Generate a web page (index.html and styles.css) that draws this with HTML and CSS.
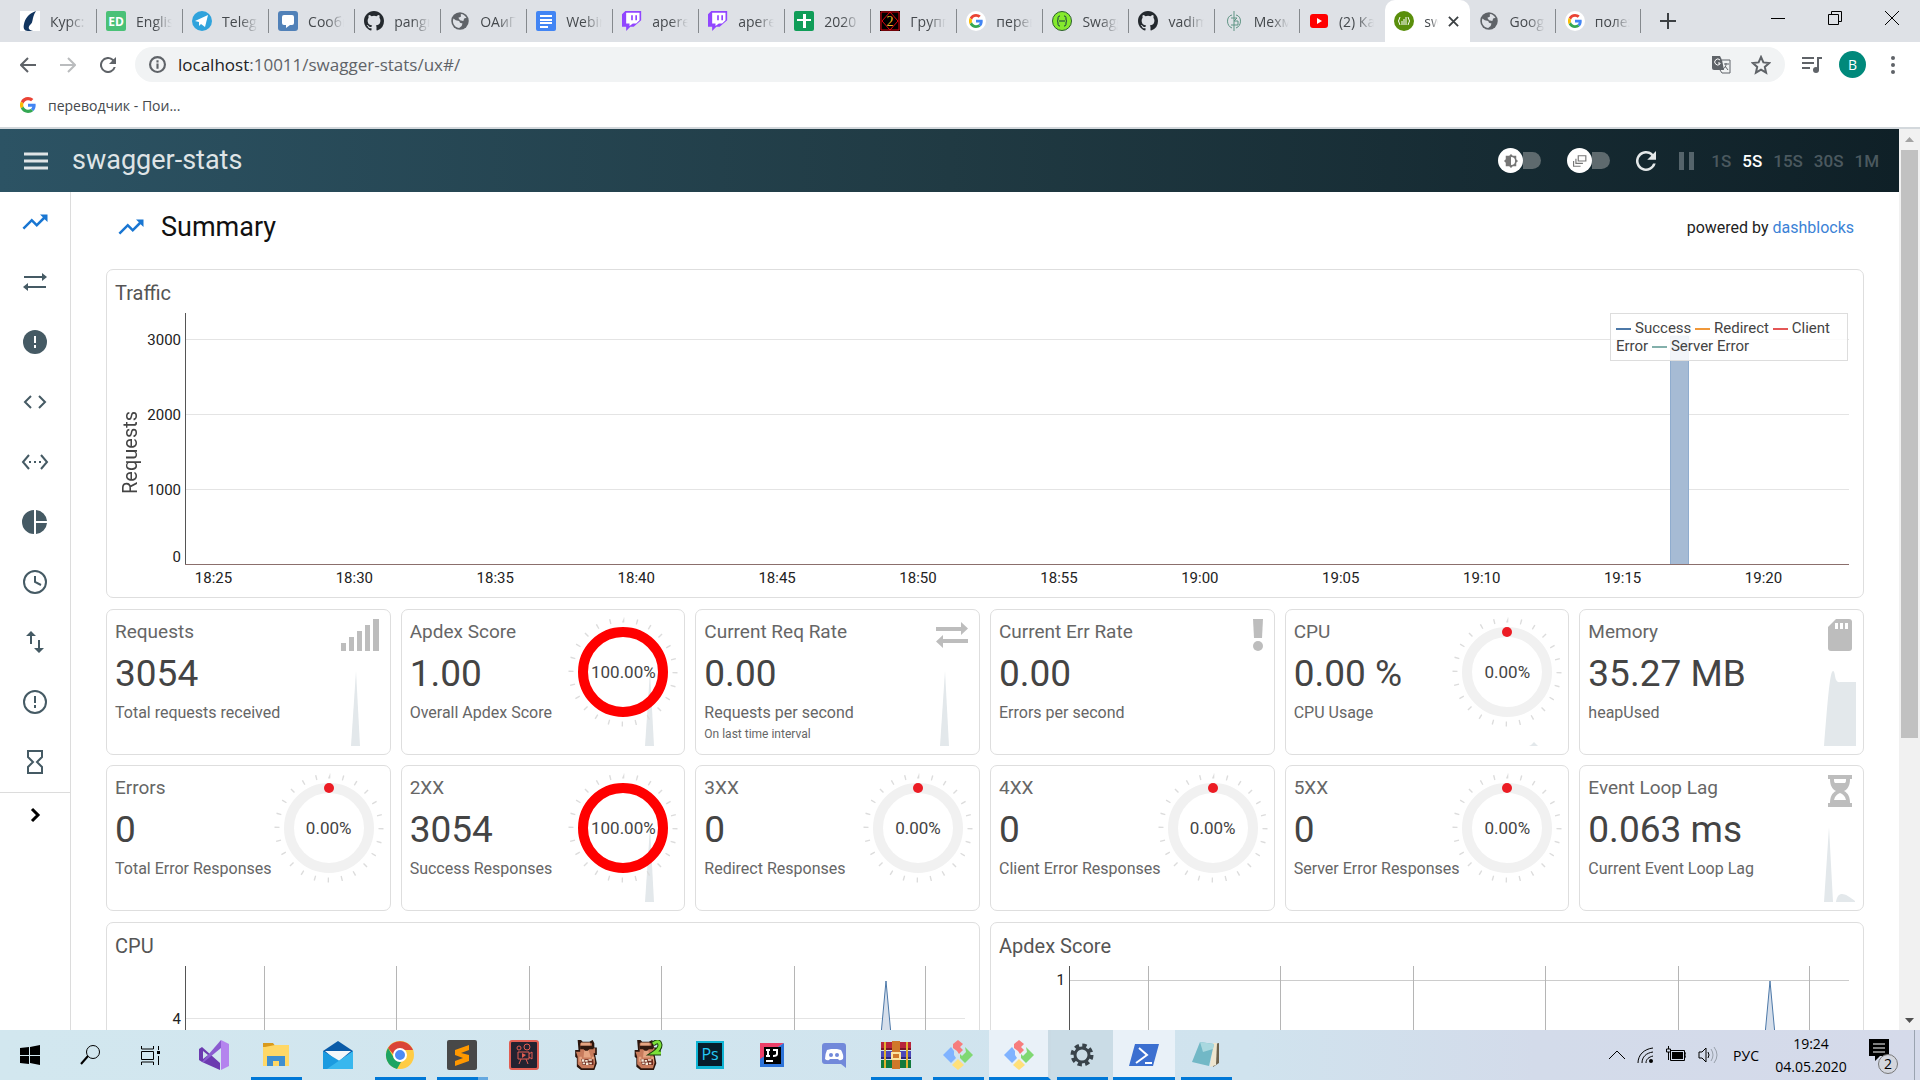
FILE: index.html
```html
<!DOCTYPE html>
<html lang="ru">
<head>
<meta charset="utf-8">
<title>swagger-stats</title>
<link rel="stylesheet" href="styles.css">
</head>
<body>
<svg class="defs" aria-hidden="true">
  <symbol id="github" viewBox="0 0 16 16"><path fill="#24292e" d="M8 0C3.58 0 0 3.58 0 8c0 3.54 2.29 6.53 5.47 7.59.4.07.55-.17.55-.38 0-.19-.01-.82-.01-1.49-2.01.37-2.53-.49-2.69-.94-.09-.23-.48-.94-.82-1.13-.28-.15-.68-.52-.01-.53.63-.01 1.08.58 1.23.82.72 1.21 1.87.87 2.33.66.07-.52.28-.87.51-1.07-1.78-.2-3.64-.89-3.64-3.95 0-.87.31-1.59.82-2.15-.08-.2-.36-1.02.08-2.12 0 0 .67-.21 2.2.82a7.6 7.6 0 0 1 4 0c1.53-1.04 2.2-.82 2.2-.82.44 1.1.16 1.92.08 2.12.51.56.82 1.27.82 2.15 0 3.07-1.87 3.75-3.65 3.95.29.25.54.73.54 1.48 0 1.07-.01 1.93-.01 2.2 0 .21.15.46.55.38A8 8 0 0 0 16 8c0-4.42-3.58-8-8-8z"/></symbol>
  <symbol id="globe" viewBox="0 0 24 24"><circle cx="12" cy="12" r="10.500" fill="#5f6368"/><path fill="#dee1e6" d="M13 3.500c3 .2 5.500 2 6.800 4.700L17 9l-1 3-4-1-2-3 3-1zM4 9l3 2 4 1 1 2 3 1-1 3-3 2.500C7 20 3.500 16.500 3.500 12z"/></symbol>
  <symbol id="twitch" viewBox="0 0 24 24"><path fill="#9146ff" d="M4 0 0 4v15h5v5l5-5h4l9-8V0z"/><path fill="#fff" d="M5 2h16v9l-4 4h-4l-4 3v-3H5z"/><path fill="#9146ff" d="M11 5h2v6h-2zM16 5h2v6h-2z"/></symbol>
  <symbol id="google" viewBox="0 0 48 48"><path fill="#ea4335" d="M24 9.500c3.500 0 6.700 1.200 9.200 3.600l6.900-6.900C35.900 2.400 30.500 0 24 0 14.600 0 6.500 5.400 2.600 13.200l8 6.200C12.400 13.700 17.700 9.500 24 9.500z"/><path fill="#4285f4" d="M47 24.500c0-1.600-.2-3.100-.4-4.500H24v9h12.900c-.6 3-2.200 5.500-4.700 7.200l7.700 6C44.400 38 47 31.800 47 24.500z"/><path fill="#fbbc05" d="M10.500 28.600a14.500 14.500 0 0 1 0-9.200l-8-6.200a24 24 0 0 0 0 21.600z"/><path fill="#34a853" d="M24 48c6.500 0 12-2.100 15.900-5.800l-7.700-6c-2.200 1.500-4.900 2.300-8.200 2.300-6.300 0-11.600-4.200-13.500-9.900l-8 6.200C6.500 42.600 14.600 48 24 48z"/></symbol>
  <symbol id="gtab" viewBox="0 0 20 20"><circle cx="10" cy="10" r="10" fill="#fff"/><use href="#google" x="3" y="3" width="14" height="14"/></symbol>
  <symbol id="trend" viewBox="0 0 24 24"><path fill="currentColor" d="M16 6l2.290 2.290-4.880 4.880-4-4L2 16.590 3.410 18l6-6 4 4 6.300-6.290L22 12V6z"/></symbol>
  <symbol id="git" viewBox="0 0 30 30"><path fill="#f77d7d" d="M10 4l5-4 5 4-3 3 3 3-4 4-2-3-4-3z"/><path fill="#80b3ff" d="M0 15l8-8 3 4v4l2 3-5 5z"/><path fill="#80d873" d="M22 7l8 8-8 8-5-5v-4l2 2 4-4z"/><path fill="#ffe07a" d="M15 19l6 6-6 5-6-5z"/></symbol>
  <symbol id="face" viewBox="0 0 28 36"><path fill="#2b150d" d="M4 0h4l2 2h8l4-2 2 4v5h3v9h-2l2 10-3 8H8l-5-4V22l-2-2v-8h4z"/><path fill="#c77b5c" d="M7 4h14v6h4v6h-2l2 11-2 7H9l-5-5V20l-2-6h5z"/><path fill="#e5a582" d="M8 3h11v4H8zM12 12h5l3 9h-9zM6 20h3v6H6zM21 20h3v6h-3z"/><path fill="#30190f" d="M7 7h16v4h-5l-2 2h-3l-2-2H7z"/><path fill="#6e2b1e" d="M8 23h15v7H10z"/><path fill="#f6ead8" d="M9 23h3v3H9zM13 24h3v2h-3zM17 23h4v2h-4zM10 27h3v2h-3zM14 27h3v3h-3zM18 27h3v2h-3z"/></symbol>
</svg>

<header class="browser">
  <div class="tabstrip">
    <nav class="tabs">
      <a class="tab" href="#"><svg viewBox="0 0 20 20"><path fill="#fff" d="M0 0h20v20H0z"/><path fill="#12355f" d="M16 0C8 3 5 8 4 13c-1 4 0 7 4 7h5c-5-1-5-4-3-6 4-3 1-6 6-14z"/></svg><span>Курс:</span></a>
      <a class="tab" href="#"><svg viewBox="0 0 20 20"><rect width="20" height="20" rx="2" fill="#4ac177"/><text x="10" y="15" text-anchor="middle" class="fav-ed">ED</text></svg><span>English</span></a>
      <a class="tab" href="#"><svg viewBox="0 0 20 20"><circle cx="10" cy="10" r="10" fill="#30a3dc"/><path fill="#fff" d="M3 10l13-6-3 12-4-3-2 2v-4z"/></svg><span>Telegram</span></a>
      <a class="tab" href="#"><svg viewBox="0 0 20 20"><rect width="20" height="20" rx="3" fill="#5181b8"/><path fill="#fff" d="M6 4h8a2 2 0 0 1 2 2v6a2 2 0 0 1-2 2h-2l-4 3v-3H6a2 2 0 0 1-2-2V6a2 2 0 0 1 2-2z"/></svg><span>Сообщения</span></a>
      <a class="tab" href="#"><svg><use href="#github"/></svg><span>pangr</span></a>
      <a class="tab" href="#"><svg><use href="#globe"/></svg><span>ОАиП</span></a>
      <a class="tab" href="#"><svg viewBox="0 0 20 20"><rect width="20" height="20" rx="2" fill="#4285f4"/><path fill="#fff" d="M4 4h12v2H4zM4 8h12v2H4zM4 11h12v2H4zM4 15h8v2H4z"/></svg><span>Webinar</span></a>
      <a class="tab" href="#"><svg><use href="#twitch"/></svg><span>aperel</span></a>
      <a class="tab" href="#"><svg><use href="#twitch"/></svg><span>aperel</span></a>
      <a class="tab" href="#"><svg viewBox="0 0 20 20"><rect width="20" height="20" rx="2" fill="#109d58"/><path fill="#fff" d="M9 3h3v5h5v2h-5v7H9v-7H3V8h6z"/></svg><span>2020 </span></a>
      <a class="tab" href="#"><svg viewBox="0 0 20 20"><path d="M0 0h20v20H0z"/><path fill="none" stroke="#e30613" d="M1 1h18v18H1zM10 1l8 9-8 9-8-9z"/><text x="10" y="15" text-anchor="middle" class="fav-two">2</text></svg><span>Группа</span></a>
      <a class="tab" href="#"><svg><use href="#gtab"/></svg><span>перево</span></a>
      <a class="tab" href="#"><svg viewBox="0 0 20 20"><circle cx="10" cy="10" r="9.500" fill="#85ea2d" stroke="#2c5e2e"/><path fill="none" stroke="#173647" d="M8 5c-2 0-2 1-2 3s-1 2-1 2 1 0 1 2 0 3 2 3M12 5c2 0 2 1 2 3s1 2 1 2-1 0-1 2 0 3-2 3M7 10h6"/></svg><span>Swagger</span></a>
      <a class="tab tight" href="#"><svg><use href="#github"/></svg><span>vadim</span></a>
      <a class="tab tight" href="#"><svg viewBox="0 0 20 20"><path fill="none" stroke="#5f9484" d="M10 0v20M8 4c-6 1-6 11 0 13M12 4c6 1 6 11 0 13M7 7h6l-3 3h4v4H7"/></svg><span>Мехма</span></a>
      <a class="tab tight before-active" href="#"><svg viewBox="0 0 20 20"><rect x="1" y="3" width="18" height="14" rx="3" fill="#f00"/><path fill="#fff" d="M8 7l5 3-5 3z"/></svg><span>(2) Ка</span></a>
      <a class="tab tight active" href="#"><svg viewBox="0 0 20 20"><circle cx="10" cy="10" r="10" fill="#5a8f0c"/><path fill="none" stroke="#fff" d="M6 6q-3 4 0 8M14 6q3 4 0 8M8 10v4M10 8v6M12 6v8"/></svg><span>swagger</span><svg class="tab-x" viewBox="0 0 12 12"><path d="M1 1l10 10M11 1L1 11" stroke="#3c4043" stroke-width="2"/></svg></a>
      <a class="tab tight" href="#"><svg><use href="#globe"/></svg><span>Google</span></a>
      <a class="tab tight" href="#"><svg><use href="#gtab"/></svg><span>полез</span></a>
    </nav>
    <button class="newtab" aria-label="Новая вкладка"><svg viewBox="0 0 16 16"><path d="M8 0v16M0 8h16" stroke="#3c4043" stroke-width="2"/></svg></button>
    <div class="winctl">
      <button aria-label="Свернуть"><svg viewBox="0 0 14 14"><path d="M0 7.500h14" stroke="#000"/></svg></button>
      <button aria-label="Развернуть"><svg viewBox="0 0 14 14"><path d="M.5 3.500h10v10H.5zM3.500 3V.5h10v10H11" fill="none" stroke="#000"/></svg></button>
      <button aria-label="Закрыть"><svg viewBox="0 0 14 14"><path d="M0 0l14 14M14 0L0 14" stroke="#000"/></svg></button>
    </div>
  </div>
  <div class="toolbar">
    <button class="nav" aria-label="Назад"><svg viewBox="0 0 16 16"><path d="M16 8H1M8 1L1 8l7 7" fill="none" stroke="#5f6368" stroke-width="2"/></svg></button>
    <button class="nav" aria-label="Вперёд"><svg viewBox="0 0 16 16"><path d="M0 8h15M8 1l7 7-7 7" fill="none" stroke="#babcbe" stroke-width="2"/></svg></button>
    <button class="nav" aria-label="Обновить"><svg viewBox="0 0 16 16"><path fill="#5f6368" d="M13.650 2.350A8 8 0 1 0 15.730 10h-2.080A6 6 0 1 1 8 2c1.660 0 3.140.69 4.220 1.780L9 7h7V0z"/></svg></button>
    <div class="omnibox">
      <svg class="i17" viewBox="0 0 16 16"><circle cx="8" cy="8" r="7" fill="none" stroke="#5f6368" stroke-width="2"/><path fill="#5f6368" d="M7 7h2v5H7zM7 4h2v2H7z"/></svg>
      <span class="url"><b>localhost</b>:10011/swagger-stats/ux#/</span>
      <svg class="i20" viewBox="0 0 20 20"><path fill="#5f6368" d="M1 1h8l2 4 2 10H3a2 2 0 0 1-2-2z"/><path d="M11 5h8v13h-8l-2-3M13 9h5M15 8v1c0 2-1 4-3 5M14 11l3 4" fill="none" stroke="#5f6368"/><path d="M9 5a3 3 0 1 0 0 4V8H7" fill="none" stroke="#fff"/></svg>
      <svg class="i20" viewBox="0 0 20 20"><path d="M10 2l2.400 5.400 5.800.6-4.400 3.900 1.300 5.800L10 14.700l-5.100 3 1.300-5.800L1.800 8l5.800-.6z" fill="none" stroke="#5f6368" stroke-width="2"/></svg>
    </div>
    <button class="media" aria-label="Медиа"><svg viewBox="0 0 20 18"><path d="M0 2h12M0 7h12M0 12h8M16 14V2h4" fill="none" stroke="#5f6368" stroke-width="2"/><circle cx="14" cy="14" r="3" fill="#5f6368"/></svg></button>
    <button class="avatar">B</button>
    <button class="dots" aria-label="Меню"><svg viewBox="0 0 4 18"><g fill="#5f6368"><circle cx="2" cy="2" r="2"/><circle cx="2" cy="9" r="2"/><circle cx="2" cy="16" r="2"/></g></svg></button>
  </div>
  <div class="bookmarks"><a href="#"><svg><use href="#google"/></svg>переводчик - Пои...</a></div>
</header>

<div class="viewport">
  <div class="app">
    <header class="appbar">
      <button class="burger" aria-label="Menu"><svg viewBox="0 0 24 18"><path d="M0 2h24M0 9h24M0 16h24" stroke="#dfe4e6" stroke-width="3"/></svg></button>
      <h1>swagger-stats</h1>
      <button class="switch" aria-label="Theme"><i><svg viewBox="0 0 24 24"><path fill="#777" d="M12 0l3 3h6v6l3 3-3 3v6h-6l-3 3-3-3H3v-6l-3-3 3-3V3h6z"/><path fill="#fff" d="M12 5a7 7 0 0 1 0 14z"/></svg></i></button>
      <button class="switch" aria-label="Windows"><i><svg viewBox="0 0 24 24"><path d="M9 3h13v9H9zM5 8v8h12M1 12v9h12" fill="none" stroke="#777" stroke-width="2"/></svg></i></button>
      <button class="refresh" aria-label="Refresh"><svg viewBox="0 0 16 16"><path fill="#e4e8e9" d="M13.650 2.350A8 8 0 1 0 15.730 10h-2.080A6 6 0 1 1 8 2c1.660 0 3.140.69 4.220 1.780L9 7h7V0z"/></svg></button>
      <button class="pause" aria-label="Pause"><svg viewBox="0 0 16 18"><path fill="#55646b" d="M0 0h5v18H0zM10 0h5v18h-5z"/></svg></button>
      <div class="rates"><button>1S</button><button class="on">5S</button><button>15S</button><button>30S</button><button>1M</button></div>
    </header>
    <div class="body">
      <nav class="side">
        <a class="cur" href="#" aria-label="Summary"><svg class="i30" viewBox="0 0 24 24"><use href="#trend"/></svg></a>
        <a href="#" aria-label="Requests"><svg viewBox="0 0 24 24"><path d="M1 7h18M23 17H5" stroke="currentColor" stroke-width="2"/><path fill="currentColor" d="M19 3l5 4-5 4zM5 13l-5 4 5 4z"/></svg></a>
        <a href="#" aria-label="Errors"><svg viewBox="0 0 24 24"><circle cx="12" cy="12" r="12" fill="currentColor"/><path fill="#fff" d="M11 6h2v7h-2zM11 15h2v3h-2z"/></svg></a>
        <a href="#" aria-label="API"><svg viewBox="0 0 24 24"><path d="M8 6l-6 6 6 6M16 6l6 6-6 6" fill="none" stroke="currentColor" stroke-width="2"/></svg></a>
        <a href="#" aria-label="API operation"><svg viewBox="0 0 24 24"><path d="M6 5l-6 7 6 7M18 5l6 7-6 7" fill="none" stroke="currentColor" stroke-width="2"/><path fill="currentColor" d="M6 11h2v2H6zM11 11h2v2h-2zM16 11h2v2h-2z"/></svg></a>
        <a href="#" aria-label="Payload"><svg viewBox="0 0 24 24"><path fill="currentColor" d="M11 0v24a12 12 0 0 1 0-24zM13 0a12 12 0 0 1 11 11H13zM13 13h11a12 12 0 0 1-11 11z"/></svg></a>
        <a href="#" aria-label="Time"><svg viewBox="0 0 24 24"><circle cx="12" cy="12" r="11" fill="none" stroke="currentColor" stroke-width="2"/><path d="M12 6v6l6 3" fill="none" stroke="currentColor" stroke-width="2"/></svg></a>
        <a href="#" aria-label="Rates"><svg viewBox="0 0 24 24"><path d="M8 14V4M16 10v10" stroke="currentColor" stroke-width="2"/><path fill="currentColor" d="M8 1l5 5H3zM16 23l5-5H11z"/></svg></a>
        <a href="#" aria-label="Last errors"><svg viewBox="0 0 24 24"><circle cx="12" cy="12" r="11" fill="none" stroke="currentColor" stroke-width="2"/><path fill="currentColor" d="M11 6h2v7h-2zM11 15h2v3h-2z"/></svg></a>
        <a href="#" aria-label="Longest"><svg viewBox="0 0 24 24"><path d="M5 1h14v6l-5 5 5 5v6H5v-6l5-5-5-5z" fill="none" stroke="currentColor" stroke-width="2"/></svg></a>
        <a class="expand" href="#" aria-label="Expand"><svg viewBox="0 0 24 24"><path d="M9 6l6 6-6 6" fill="none" stroke="#000" stroke-width="3"/></svg></a>
      </nav>
      <main>
        <div class="heading">
          <svg viewBox="0 0 24 24"><use href="#trend"/></svg>
          <h2>Summary</h2>
          <p>powered by <a href="#">dashblocks</a></p>
        </div>

        <section class="card chart">
          <h3>Traffic</h3>
          <div class="axes">
            <div class="ycol"><div class="yname">Requests</div><div class="ylabels"><span>3000</span><span>2000</span><span>1000</span><span>0</span></div></div>
            <div class="plot">
              <svg viewBox="0 0 1664 252" preserveAspectRatio="none">
                <path class="grid" d="M0 26.500h1664M0 101.500h1664M0 176.500h1664"/>
                <path fill="#a6bbd4" stroke="#8facce" d="M1485.500 23h18v229h-18z"/>
                <path class="axis" d="M.5 0v252"/><path stroke="#8b6f6c" d="M0 251.500h1664"/>
              </svg>
              <div class="legend"><i class="c1"></i>Success <i class="c2"></i>Redirect <i class="c3"></i>Client Error <i class="c4"></i>Server Error</div>
            </div>
          </div>
          <div class="xlabels"><span>18:25</span><span>18:30</span><span>18:35</span><span>18:40</span><span>18:45</span><span>18:50</span><span>18:55</span><span>19:00</span><span>19:05</span><span>19:10</span><span>19:15</span><span>19:20</span></div>
        </section>

        <div class="cards">
          <section class="card stat"><h3>Requests</h3><strong>3054</strong><p>Total requests received</p>
            <svg class="mark" viewBox="0 0 38 32"><path fill="#bdbdbd" d="M0 24h5v8H0zM8 18h5v14H8zM16 12h5v20h-5zM24 6h5v26h-5zM32 0h6v32h-6z"/></svg>
            <svg class="spark" viewBox="0 0 32 75"><path d="M0 75L5 0l4 75z"/></svg></section>
          <section class="card stat"><h3>Apdex Score</h3><strong>1.00</strong><p>Overall Apdex Score</p>
            <svg class="spark" viewBox="0 0 32 75"><path d="M0 75L5 0l4 75z"/></svg>
            <div class="gauge full"><svg viewBox="0 0 112 112"><circle class="tick" cx="56" cy="56" r="52" pathLength="240"/><circle class="ring" cx="56" cy="56" r="40"/></svg><span>100.00%</span></div></section>
          <section class="card stat"><h3>Current Req Rate</h3><strong>0.00</strong><p>Requests per second</p><small>On last time interval</small>
            <svg class="mark" viewBox="0 0 32 32"><path fill="#bdbdbd" d="M0 8h25V3l7 6.500-7 6.500v-4H0zM32 20H7v-4L0 22.500 7 29v-5h25z"/></svg>
            <svg class="spark" viewBox="0 0 32 75"><path d="M0 75L5 0l4 75z"/></svg></section>
          <section class="card stat"><h3>Current Err Rate</h3><strong>0.00</strong><p>Errors per second</p>
            <svg class="mark" viewBox="0 0 10 32"><path fill="#bdbdbd" d="M0 0h10L9 19H1z"/><circle cx="5" cy="27" r="5" fill="#bdbdbd"/></svg></section>
          <section class="card stat"><h3>CPU</h3><strong>0.00 %</strong><p>CPU Usage</p>
            <svg class="spark" viewBox="0 0 32 75"><path d="M0 75l2-1 3-3 3 3 1 1z"/></svg>
            <div class="gauge"><svg viewBox="0 0 112 112"><circle class="tick" cx="56" cy="56" r="52" pathLength="240"/><circle class="ring" cx="56" cy="56" r="40"/><circle cx="56" cy="16" r="5" fill="#ec1c24"/></svg><span>0.00%</span></div></section>
          <section class="card stat"><h3>Memory</h3><strong>35.27 MB</strong><p>heapUsed</p>
            <svg class="mark" viewBox="0 0 24 32"><path fill="#bdbdbd" d="M8 0h13a3 3 0 0 1 3 3v26a3 3 0 0 1-3 3H3a3 3 0 0 1-3-3V8z"/><path fill="#fff" d="M7 4h3v6H7zM12 4h3v6h-3zM17 4h3v6h-3z"/></svg>
            <svg class="spark" viewBox="0 0 32 75"><path d="M0 75C3 40 5 8 8 1q2-3 3 4t5 6h16v64z"/></svg></section>

          <section class="card stat"><h3>Errors</h3><strong>0</strong><p>Total Error Responses</p>
            <div class="gauge"><svg viewBox="0 0 112 112"><circle class="tick" cx="56" cy="56" r="52" pathLength="240"/><circle class="ring" cx="56" cy="56" r="40"/><circle cx="56" cy="16" r="5" fill="#ec1c24"/></svg><span>0.00%</span></div></section>
          <section class="card stat"><h3>2XX</h3><strong>3054</strong><p>Success Responses</p>
            <svg class="spark" viewBox="0 0 32 75"><path d="M0 75L5 0l4 75z"/></svg>
            <div class="gauge full"><svg viewBox="0 0 112 112"><circle class="tick" cx="56" cy="56" r="52" pathLength="240"/><circle class="ring" cx="56" cy="56" r="40"/></svg><span>100.00%</span></div></section>
          <section class="card stat"><h3>3XX</h3><strong>0</strong><p>Redirect Responses</p>
            <div class="gauge"><svg viewBox="0 0 112 112"><circle class="tick" cx="56" cy="56" r="52" pathLength="240"/><circle class="ring" cx="56" cy="56" r="40"/><circle cx="56" cy="16" r="5" fill="#ec1c24"/></svg><span>0.00%</span></div></section>
          <section class="card stat"><h3>4XX</h3><strong>0</strong><p>Client Error Responses</p>
            <div class="gauge"><svg viewBox="0 0 112 112"><circle class="tick" cx="56" cy="56" r="52" pathLength="240"/><circle class="ring" cx="56" cy="56" r="40"/><circle cx="56" cy="16" r="5" fill="#ec1c24"/></svg><span>0.00%</span></div></section>
          <section class="card stat"><h3>5XX</h3><strong>0</strong><p>Server Error Responses</p>
            <div class="gauge"><svg viewBox="0 0 112 112"><circle class="tick" cx="56" cy="56" r="52" pathLength="240"/><circle class="ring" cx="56" cy="56" r="40"/><circle cx="56" cy="16" r="5" fill="#ec1c24"/></svg><span>0.00%</span></div></section>
          <section class="card stat"><h3>Event Loop Lag</h3><strong>0.063 ms</strong><p>Current Event Loop Lag</p>
            <svg class="mark" viewBox="0 0 24 32"><path fill="#bdbdbd" fill-rule="evenodd" d="M0 0h24v4h-2c0 6-2 10-6 12 4 2 6 6 6 12h2v4H0v-4h2c0-6 2-10 6-12C4 14 2 10 2 4H0zM6 4c0 2 0 3 1 4h10c1-1 1-2 1-4zM12 18c-3 1-5 3-6 7h12c-1-4-3-6-6-7z"/></svg>
            <svg class="spark" viewBox="0 0 32 75"><path d="M0 75L5 0l4 75zM12 75c2-12 9-9 19-1v1z"/></svg></section>
        </div>

        <div class="cards halves">
          <section class="card chart">
            <h3>CPU</h3>
            <div class="axes">
              <div class="ycol"><div class="ylabels low"><span>4</span></div></div>
              <div class="plot"><svg viewBox="0 0 780 252" preserveAspectRatio="none">
                <path class="grid" d="M0 52.500h780"/>
                <path class="vgrid" d="M79.500 0v252M211.500 0v252M344.500 0v252M476.500 0v252M609.500 0v252M740.500 0v252"/>
                <path class="peak" d="M679 252L701 15l22 237z"/>
                <path class="axis" d="M.5 0v252"/></svg></div>
            </div>
          </section>
          <section class="card chart">
            <h3>Apdex Score</h3>
            <div class="axes">
              <div class="ycol"><div class="ylabels high"><span>1</span></div></div>
              <div class="plot"><svg viewBox="0 0 780 252" preserveAspectRatio="none">
                <path stroke="#ccc" d="M0 14.500h780"/>
                <path class="vgrid" d="M79.500 0v252M211.500 0v252M344.500 0v252M476.500 0v252M609.500 0v252M740.500 0v252"/>
                <path class="peak" d="M679 252L701 15l22 237z"/>
                <path class="axis" d="M.5 0v252"/></svg></div>
            </div>
          </section>
        </div>
      </main>
    </div>
  </div>
  <div class="scroll">
    <svg viewBox="0 0 21 21"><path fill="#a3a3a3" d="M6 13l4.500-5 4.500 5z"/></svg>
    <div class="thumb"></div><div class="rest"></div>
    <svg viewBox="0 0 21 21"><path fill="#505050" d="M6 9l4.500 5L15 9z"/></svg>
  </div>
</div>

<footer class="taskbar">
  <button class="sys" aria-label="Пуск"><svg viewBox="0 0 20 20"><path d="M0 3l9-1v8H0zM10 2l10-2v10H10zM0 11h9v8l-9-1zM10 11h10v9l-10-2z"/></svg></button>
  <button class="sys" aria-label="Поиск"><svg viewBox="0 0 20 20"><path d="M1 19l7-8" stroke="#000" stroke-width="2"/><circle cx="13" cy="7" r="6.500" fill="none" stroke="#000"/></svg></button>
  <button class="sys" aria-label="Представление задач"><svg viewBox="0 0 20 20"><path d="M1.500 1v3h12V1M1.500 6.500h12v8h-12zM1.500 20v-3h12v3M18.500 1v4M18.500 11v9" fill="none" stroke="#000"/><path d="M17 6h3v3h-3z"/></svg></button>
  <div class="apps">
    <button aria-label="Visual Studio"><svg viewBox="0 0 30 30"><path fill="#6c3bb0" d="M0 9l3-2 18 16V30L3 22l-3-2z"/><path fill="#8a5bd0" d="M3 22L22 0v8L5 22z"/><path fill="#d2e6ee" d="M4 11l5 4-5 4z"/><path fill="#b484ee" d="M22 0l8 4v22l-8 4z"/></svg></button>
    <button class="run" aria-label="Проводник"><svg viewBox="0 0 30 30"><path fill="#d99a1c" d="M2 3h10l3 4H2z"/><path fill="#ffd867" d="M2 7h2l10-2h14v21H2z"/><path fill="#3f8fd0" d="M6 26V16h18v10h-6v-5h-6v5z"/></svg></button>
    <button aria-label="Почта"><svg viewBox="0 0 30 30"><path fill="#0a5ba8" d="M0 11L15 1l15 10v10H0z"/><path fill="#f3f7fa" d="M2 11h26L15 22z"/><path fill="#1b9be0" d="M0 11l30 18H0z"/><path fill="#38b7ee" d="M30 11v18H4z"/></svg></button>
    <button class="run" aria-label="Chrome"><svg viewBox="0 0 30 30"><circle cx="15" cy="15" r="14" fill="#fc4"/><path fill="#da4437" d="M3 8a14 14 0 0 1 24 0l1 2H15l-6 5z"/><path fill="#1da462" d="M3 8l6 10 7 4-4 7A14 14 0 0 1 3 8z"/><circle cx="15" cy="15" r="6" fill="#4c8bf5" stroke="#fff" stroke-width="2"/></svg></button>
    <button class="run multi" aria-label="Sublime"><svg viewBox="0 0 30 30"><rect width="30" height="30" rx="2" fill="#484848"/><path fill="#ff9800" d="M8 10l14-5v5l-8 3 8 2v6L8 26v-5l8-3-8-3z"/></svg></button>
    <button aria-label="Видео"><svg viewBox="0 0 30 30"><rect x="1" y="1" width="28" height="28" rx="2" fill="#242230" stroke="#e25d52" stroke-width="2"/><path d="M9 12h11v7H9zM20 14l3-2v7l-3-2M12 19l-2 5M17 19l2 5" fill="none" stroke="#e25d52"/><path fill="#e25d52" d="M13 13l4 2-4 3z"/><circle cx="10" cy="8" r="2" fill="none" stroke="#e25d52"/><circle cx="18" cy="7" r="3" fill="none" stroke="#e25d52"/></svg></button>
    <button aria-label="Troll"><svg><use href="#face"/></svg></button>
    <button aria-label="Troll 2"><svg viewBox="0 0 30 30"><use href="#face" x="0" y="0" width="25" height="30"/><path d="M20 4q6-5 7 1 0 4-6 8h7" fill="none" stroke="#183d0c" stroke-width="5"/><path d="M20 4q6-5 7 1 0 4-6 8h7" fill="none" stroke="#7be03a" stroke-width="3"/></svg></button>
    <button aria-label="Photoshop"><svg viewBox="0 0 30 30"><path fill="#0fb4d4" d="M1 1h28v28H1z"/><path fill="#071d2b" d="M3 3h24v23H3z"/><text x="15" y="20" text-anchor="middle" class="ps">Ps</text></svg></button>
    <button aria-label="IntelliJ"><svg viewBox="0 0 30 30"><path fill="#ec3f68" d="M3 3h24L3 20z"/><path fill="#2d73d8" d="M27 3v24H3v-8z"/><path d="M7 7h17v17H7z"/><path d="M9 10h4M11 10v6M9 16h4M16 10h4v4q0 2-4 2M9 21h7" fill="none" stroke="#fff" stroke-width="2"/></svg></button>
    <button aria-label="Discord"><svg viewBox="0 0 30 30"><path fill="#7289da" d="M6 3h18q3 0 3 3v22l-5-4H6q-3 0-3-3V6q0-3 3-3z"/><path fill="#fff" d="M8 10l4-1h6l4 1q3 5 2 9-3 2-4 1l-1-1h-8l-1 1q-2 1-4-1 0-5 2-9z"/><circle cx="12" cy="15" r="2" fill="#7289da"/><circle cx="18" cy="15" r="2" fill="#7289da"/></svg></button>
    <button class="run" aria-label="WinRAR"><svg viewBox="0 0 30 30"><path fill="#b8243a" d="M0 2h30v8H0z"/><path fill="#4c48b8" d="M0 11h30v8H0z"/><path fill="#127a3c" d="M0 20h30v8H0z"/><path fill="#7a1526" d="M0 8h30v2H0z"/><path fill="#2b2678" d="M0 17h30v2H0z"/><path fill="#e0b030" d="M3 2h2v26H3zM25 2h2v26h-2z"/><path fill="#d0782a" d="M11 1h8v28h-8z"/><path d="M11 13h8v6h-8z" fill="none" stroke="#fbe3a0" stroke-width="2"/></svg></button>
    <button class="run" aria-label="Git"><svg><use href="#git"/></svg></button>
    <button class="lit stack" aria-label="Git Bash"><svg><use href="#git"/></svg></button>
    <button class="run dim" aria-label="Параметры"><svg viewBox="0 0 30 30"><circle cx="15" cy="15" r="9" fill="none" stroke="#39434a" stroke-width="5" stroke-dasharray="4 3.070"/><circle cx="15" cy="15" r="7" fill="none" stroke="#39434a" stroke-width="3"/></svg></button>
    <button class="lit" aria-label="PowerShell"><svg viewBox="0 0 30 30"><path fill="#3b6fd0" d="M6 4h24l-6 22H0z"/><path d="M10 8l8 7-11 8M16 23h7" fill="none" stroke="#fff" stroke-width="2"/></svg></button>
    <button class="run" aria-label="Блокнот"><svg viewBox="0 0 30 30"><path fill="#6c614b" d="M24 4l4-1v20l-6 4z"/><path fill="#eee6cf" d="M22 3h4l-1 22-6 2z"/><path fill="#72b8c6" d="M9 2l14 2-5 22-17-4z"/><path fill="#a9d8df" d="M9 2l14 2-1 5-10 3z"/></svg></button>
  </div>
  <div class="tray">
    <svg class="i17" viewBox="0 0 17 17"><path d="M1 12l8-8 8 8" fill="none" stroke="#000"/></svg>
    <svg class="i17" viewBox="0 0 17 17"><path d="M1 16C1 8 7 2 16 1M5 16c0-6 4-10 11-11M9 16c0-4 3-6 7-7" fill="none" stroke="#000"/><circle cx="14" cy="14" r="2"/></svg>
    <svg class="i20" viewBox="0 0 20 20"><path d="M4.500 5.500h14v10h-14zM19 8h1v4h-1M2.500 1v3M.5 4h4v3h-4zM2.500 7v8" fill="none" stroke="#000"/><path d="M6 7h11v7H6z"/></svg>
    <svg class="i20" viewBox="0 0 20 20"><path d="M1 7h3l4-4v14l-4-4H1zM10 7q2 3 0 6" fill="none" stroke="#000"/><path d="M13 4q4 6 0 12M16 2q6 8 0 16" fill="none" stroke="#98a0aa"/></svg>
    <span class="lang">РУС</span>
    <div class="clock"><time>19:24</time><time>04.05.2020</time></div>
    <button class="note" aria-label="Уведомления"><svg viewBox="0 0 32 32"><path d="M0 0h20v17h-9l-5 5v-5H0z"/><path d="M4 5h12M4 9h12M4 13h12" stroke="#fff"/></svg><em>2</em></button>
  </div>
</footer>
</body>
</html>
```
FILE: styles.css
```css
* { box-sizing: border-box; }
body, h1, h2, h3, p { margin: 0; font-weight: 400; }
body { height: 100vh; display: flex; flex-direction: column; overflow: hidden; background: #fff; font-family: Roboto, sans-serif; color: #444; }
button { padding: 0; border: 0; background: none; font: inherit; color: inherit; display: flex; align-items: center; justify-content: center; }
a { text-decoration: none; color: inherit; }
svg { display: block; flex: none; }
.defs { position: absolute; width: 0; height: 0; }
.i17 { width: 17px; height: 17px; }
.i20 { width: 20px; height: 20px; }

/* browser frame */
.browser { flex: none; font-family: "Open Sans", "Noto Sans", sans-serif; border-bottom: 2px solid #d3d8dc; }
.tabstrip { height: 42px; background: #dee1e6; display: flex; align-items: stretch; padding-left: 11px; }
.tabs { flex: 1; display: flex; min-width: 0; }
.tab { flex: 86 1 0; min-width: 0; display: flex; align-items: center; gap: 10px; padding: 0 11px 0 9px; font-size: 14px; color: #45494d; background: linear-gradient(#85898d, #85898d) right center / 1px 24px no-repeat; }
.tab.tight { flex-grow: 85; }
.tab svg { width: 20px; height: 20px; }
.tab span { flex: 1; min-width: 0; overflow: hidden; white-space: nowrap; -webkit-mask-image: linear-gradient(90deg, #000 50%, transparent); mask-image: linear-gradient(90deg, #000 50%, transparent); }
.tab.before-active { background: none; }
.tab.active { background: #fff; border-radius: 10px 10px 0 0; }
.tab svg.tab-x { width: 11px; height: 11px; }
.newtab { width: 54px; }
.newtab svg { width: 16px; height: 16px; }
.winctl { display: flex; width: 225px; padding-left: 54px; padding-bottom: 6px; }
.winctl button { flex: 1; }
.winctl svg { width: 14px; height: 14px; }
.toolbar { height: 45px; display: flex; align-items: center; padding: 0 22px 0 8px; }
.nav { width: 40px; height: 36px; }
.nav svg { width: 16px; height: 16px; }
.omnibox { flex: 1; height: 35px; margin-left: 7px; padding: 0 14px; border-radius: 18px; background: #f1f3f4; display: flex; align-items: center; gap: 20px; }
.url { flex: 1; margin-left: -8px; font-size: 17px; color: #5f6368; }
.url b { font-weight: 400; color: #202124; }
.media { width: 54px; }
.media svg { width: 20px; height: 18px; }
.avatar { width: 27px; height: 27px; border-radius: 50%; background: #00897b; color: #fff; font-size: 14px; }
.dots { width: 32px; padding-left: 22px; }
.dots svg { width: 4px; height: 18px; }
.bookmarks { height: 40px; padding: 0 20px 4px; display: flex; align-items: center; font-size: 14px; color: #45494d; }
.bookmarks a { display: flex; align-items: center; gap: 12px; }
.bookmarks svg { width: 16px; height: 16px; }
.fav-ed { font: 700 12px "Open Sans", sans-serif; fill: #fff; }
.fav-two { font: 14px "Liberation Serif", serif; fill: #f0b323; }

/* application */
.viewport { flex: 1; min-height: 0; display: flex; }
.app { flex: 1; min-width: 0; display: flex; flex-direction: column; overflow: hidden; }
.appbar { flex: none; height: 63px; padding: 0 20px 0 24px; display: flex; align-items: center; background: linear-gradient(90deg, #2c5364, #203a43 50%, #0f2027); color: #dfe4e6; }
.burger svg { width: 24px; height: 18px; }
.appbar h1 { flex: 1; margin-left: 24px; font-size: 27px; line-height: 32px; padding-bottom: 2px; }
.switch { margin-right: 26px; }
.switch i { width: 25px; height: 25px; border-radius: 50%; background: #fff; display: flex; align-items: center; justify-content: center; }
.switch::after { content: ""; width: 18px; height: 17px; border-radius: 0 9px 9px 0; background: #5e6a6e; }
.switch svg { width: 14px; height: 14px; }
.refresh svg { width: 20px; height: 20px; }
.pause { margin: 0 16px 0 23px; }
.pause svg { width: 16px; height: 18px; }
.rates { display: flex; gap: 11px; font-size: 17px; font-weight: 500; color: #4b595f; }
.rates .on { color: #fff; }
.body { flex: 1; min-height: 0; display: flex; }
.side { flex: none; width: 71px; border-right: 1px solid #dcdcdc; color: #455a64; }
.side a { height: 60px; display: flex; align-items: center; justify-content: center; }
.side svg { width: 24px; height: 24px; overflow: visible; }
.side svg.i30 { width: 30px; height: 30px; }
.side .cur { color: #1976d2; }
.side .expand { height: 45px; border-top: 1px solid #dcdcdc; }
main { flex: 1; min-width: 0; padding: 0 35px; display: flex; flex-direction: column; gap: 11px; overflow: hidden; }
.heading { flex: none; height: 66px; padding: 4px 10px 0; display: flex; align-items: center; }
.heading svg { width: 30px; height: 30px; color: #1976d2; }
.heading h2 { flex: 1; margin-left: 15px; font-size: 27px; line-height: 32px; color: #111; }
.heading p { font-size: 16px; color: #222; }
.heading a { color: #3b82d6; }
.card { position: relative; border: 1px solid #dedede; border-radius: 7px; background: #fff; }
.card h3 { font-size: 19px; line-height: 30px; color: #555; }
.chart { flex: none; padding: 8px 14px 6px 8px; }
.card.chart h3 { margin-bottom: 5px; font-size: 20px; }
.axes { display: flex; height: 252px; }
.ycol { flex: none; width: 70px; display: flex; justify-content: space-between; }
.yname { width: 30px; writing-mode: vertical-rl; transform: rotate(180deg); text-align: center; line-height: 30px; font-size: 20px; padding-bottom: 26px; }
.ylabels { flex: 1; margin-top: -10px; padding-right: 4px; text-align: right; font-size: 15px; color: #222; }
.ylabels span { display: block; line-height: 75px; }
.ylabels span:nth-child(4) { line-height: 58px; }
.ylabels.low { margin-top: 16px; }
.ylabels.high { margin-top: -23px; }
.plot { position: relative; flex: 1; min-width: 0; }
.plot svg { width: 100%; height: 100%; }
.grid { stroke: #e4e4e4; }
.vgrid { stroke: #b5b5b5; }
.axis { stroke: #555; }
.peak { fill: #d6dfeb; stroke: #4c78a8; }
.legend { position: absolute; top: 0; right: 1px; width: 238px; height: 48px; padding: 5px; border: 1px solid #ddd; background: rgba(255, 255, 255, .85); font-size: 15px; line-height: 18px; color: #444; }
.legend i { display: inline-block; width: 15px; height: 2px; margin-right: 4px; vertical-align: middle; }
.c1 { background: #4c78a8; }
.c2 { background: #f0983a; }
.c3 { background: #e45756; }
.c4 { background: #83b0ab; }
.xlabels { display: grid; grid-template-columns: repeat(12, 1fr); margin: 0 15px 0 28px; line-height: 26px; font-size: 15px; text-align: center; color: #222; }
.cards { flex: none; display: grid; grid-template-columns: repeat(6, 1fr); gap: 10px; }
.halves { grid-template-columns: 1fr 1fr; }
.stat { height: 146px; padding: 7px 8px; display: flex; flex-direction: column; }
.stat h3 { color: #666; }
.stat strong { font-size: 37px; font-weight: 400; line-height: 53px; color: #444; }
.stat p { font-size: 16px; line-height: 26px; color: #666; }
.stat small { font-size: 12px; line-height: 16px; color: #666; }
.mark { position: absolute; top: 9px; right: 11px; height: 32px; }
.spark { position: absolute; right: 7px; bottom: 8px; width: 32px; height: 75px; fill: #e3e8eb; }
.gauge { position: absolute; top: 6px; right: 5px; width: 112px; height: 112px; display: grid; place-items: center; font-size: 17px; color: #444; }
.gauge svg, .gauge span { grid-area: 1 / 1; }
.gauge svg { width: 112px; height: 112px; }
.gauge circle.tick { fill: none; stroke: #dcdcdc; stroke-width: 5; stroke-dasharray: 1 9; }
.ring { fill: none; stroke: #f1f1f1; stroke-width: 10; }
.full .ring { stroke: #f00; }
.scroll { flex: none; width: 21px; display: flex; flex-direction: column; background: #f1f1f1; }
.scroll svg { width: 21px; height: 21px; }
.thumb { flex: 588; margin: 0 2px; background: #c1c1c1; }
.rest { flex: 271; }

/* taskbar */
.taskbar { flex: none; height: 50px; display: flex; background: linear-gradient(90deg, #d2e7ef, #d0e3ee 65%, #d3dbea 80%, #d5daea); font-family: "Open Sans", "Noto Sans", sans-serif; color: #000; }
.sys { width: 60px; }
.sys svg { width: 20px; height: 20px; }
.apps { flex: 1; display: flex; padding-left: 3px; }
.apps button { width: 62px; }
.apps svg { width: 30px; height: 30px; }
.apps .ps { font: 16px "Open Sans", sans-serif; fill: #26c9f5; }
.run { background: linear-gradient(#0078d7, #0078d7) center bottom / 51px 3px no-repeat; }
.multi { background: linear-gradient(90deg, #0078d7 80%, #66a9e0 80%) center bottom / 51px 3px no-repeat; }
.lit { background: #e9f1f8; border-bottom: 3px solid #0078d7; padding-top: 3px; }
.stack { border-right: 3px solid #c9dae4; }
.dim { background-color: #cadce6; }
.tray { display: flex; align-items: center; gap: 12px; padding-right: 5px; font-size: 14px; }
.lang { margin-left: 3px; }
.clock { display: flex; flex-direction: column; align-items: center; width: 80px; margin-right: 4px; line-height: 23px; }
.note { position: relative; width: 48px; height: 50px; padding-left: 2px; justify-content: flex-start; border-right: 1px solid #9aa3b0; }
.note svg { width: 32px; height: 32px; }
.note em { position: absolute; left: 11px; top: 24px; width: 20px; height: 20px; border: 1px solid #777; border-radius: 50%; background: #d3d6de; font-style: normal; font-size: 14px; line-height: 18px; text-align: center; }
```
